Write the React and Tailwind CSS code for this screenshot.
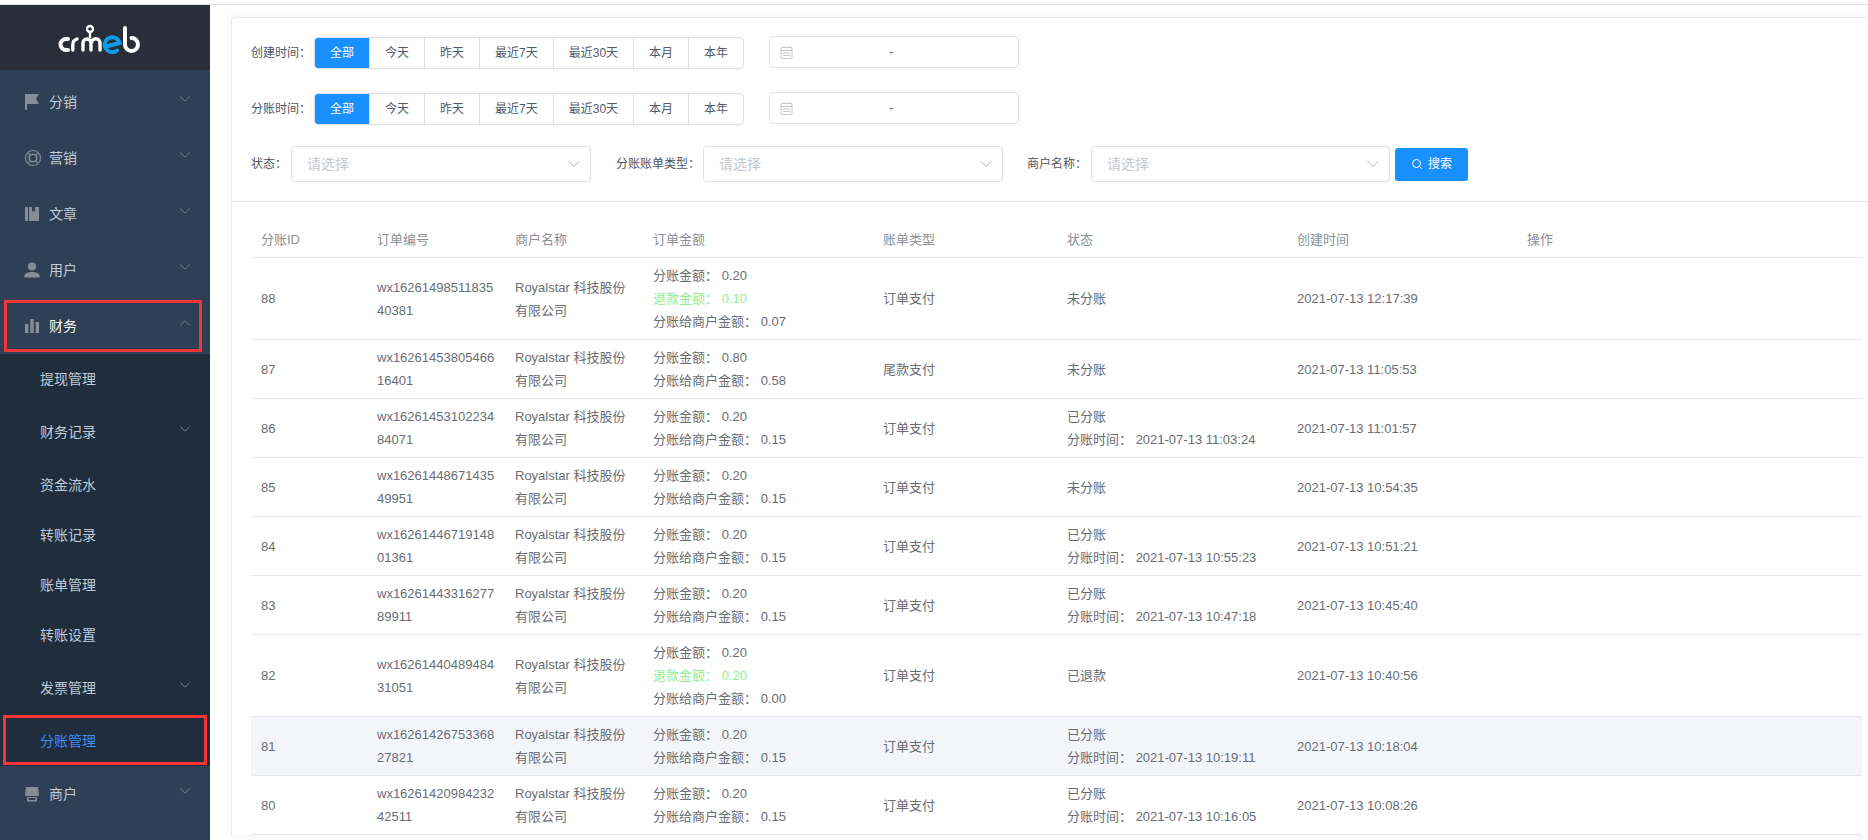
import React from 'react';
import { ChevronDown, ChevronUp, Search } from 'lucide-react';

const FlagIcon = () => (
  <svg width="16" height="18" viewBox="0 0 16 18" fill="#858d98">
    <rect x="1" y="1" width="2" height="16" />
    <path d="M3 1h12l-3 5 3 5H3z" />
  </svg>
);

const RingIcon = () => (
  <svg width="18" height="18" viewBox="0 0 18 18" fill="none" stroke="#858d98">
    <circle cx="9" cy="9" r="7.5" strokeWidth="1.2" />
    <circle cx="9" cy="9" r="3.8" strokeWidth="1.6" />
    <path d="M4 4l2.2 2.2M14 4l-2.2 2.2M4 14l2.2-2.2M14 14l-2.2-2.2" strokeWidth="1.2" />
  </svg>
);

const BookIcon = () => (
  <svg width="16" height="16" viewBox="0 0 16 16" fill="#858d98">
    <rect x="1" y="1" width="3" height="14" />
    <path d="M5 1h3v5l1.5-1.5L11 6V1h4v14H5z" />
  </svg>
);

const UserIcon = () => (
  <svg width="16" height="16" viewBox="0 0 16 16" fill="#858d98">
    <circle cx="8" cy="4.5" r="4" />
    <path d="M0.5 15.5v-2c0-2.2 3.5-3.5 7.5-3.5s7.5 1.3 7.5 3.5v2z" />
  </svg>
);

const ChartIcon = () => (
  <svg width="16" height="16" viewBox="0 0 16 16" fill="#858d98">
    <rect x="1" y="6" width="3.4" height="9" />
    <rect x="6.3" y="1" width="3.4" height="14" />
    <rect x="11.6" y="4" width="3.4" height="11" />
  </svg>
);

const ShopIcon = () => (
  <svg width="16" height="16" viewBox="0 0 16 16" fill="#858d98">
    <path d="M2 1h12l1 9H1z" />
    <rect x="3" y="11" width="10" height="1" />
    <rect x="3" y="12" width="1.5" height="3" />
    <rect x="11.5" y="12" width="1.5" height="3" />
    <rect x="3" y="14" width="10" height="1.5" />
  </svg>
);

const CalendarIcon = () => (
  <svg width="13" height="13" viewBox="0 0 13 13" fill="none" stroke="#c5c8ce">
    <rect x="1" y="1.5" width="11" height="11" rx="1" />
    <path d="M1 4.5h11M3 7h7M3 9.5h7M4 0v2M9 0v2" />
  </svg>
);

const Logo = () => (
  <svg width="90" height="30" viewBox="0 0 90 30" fill="none" strokeWidth="4" strokeLinecap="round">
    <g stroke="#ffffff">
      <path d="M14 15h-2a5.5 5.5 0 0 0 0 11h2" />
      <path d="M18.8 26v-5a6 6 0 0 1 4.2-6" strokeWidth="3.4" />
      <path d="M29 26v-7a4 4 0 0 1 8 0v7M37.5 19a4 4 0 0 1 8.5 0v7" strokeWidth="3.4" />
      <circle cx="36" cy="5" r="3" strokeWidth="2.4" />
      <path d="M36 9v5" strokeWidth="2.4" strokeLinecap="butt" />
      <path d="M71 4v16.5a6.5 6.5 0 1 0 6.5-6.5" />
    </g>
    <path d="M52 22.5l13.5-3.5a7.5 7.5 0 1 0-2.5 7.5" stroke="#0e9be8" />
  </svg>
);

const topMenus = [
  { name: '分销', icon: <FlagIcon /> },
  { name: '营销', icon: <RingIcon /> },
  { name: '文章', icon: <BookIcon /> },
  { name: '用户', icon: <UserIcon /> },
];

const subMenus = [
  { name: '提现管理' },
  { name: '财务记录', arrow: true },
  { name: '资金流水' },
  { name: '转账记录' },
  { name: '账单管理' },
  { name: '转账设置' },
  { name: '发票管理', arrow: true },
  { name: '分账管理', active: true },
];

const MenuRow = ({ icon, name, open, highlight }) => (
  <div className={`relative flex h-14 items-center pl-[24px] pr-[16px] text-sm ${highlight ? 'text-[#f5f5f5]' : 'text-[#bfcbd9]'}`}>
    <span className="flex w-[25px] shrink-0 items-center">{icon}</span>
    <span className="flex-1">{name}</span>
    {open ? (
      <ChevronUp size={18} strokeWidth={1} absoluteStrokeWidth className="-mt-1.5 text-[#75818f]" />
    ) : (
      <ChevronDown size={18} strokeWidth={1} absoluteStrokeWidth className="-mt-1.5 text-[#75818f]" />
    )}
    {highlight && <div className="absolute inset-y-0.5 left-1 right-2 border-[3px] border-[#f33535]" />}
  </div>
);

const Sidebar = () => (
  <aside className="flex w-[210px] shrink-0 flex-col bg-[#2f4056]">
    <div className="flex h-[65px] shrink-0 items-center justify-center bg-[#2a2e39] pr-[12px] pt-[3px]">
      <Logo />
    </div>
    <div className="pt-1">
      {topMenus.map((m) => (
        <MenuRow key={m.name} icon={m.icon} name={m.name} />
      ))}
      <MenuRow icon={<ChartIcon />} name="财务" open highlight />
      <div className="bg-[#1f2d3d]">
        {subMenus.map((s) => (
          <div
            key={s.name}
            className={`relative flex items-center pl-[40px] pr-[16px] text-sm ${s.arrow ? 'h-14' : 'h-[50px]'} ${s.active ? 'text-[#3d8ff2]' : 'text-[#bfcbd9]'}`}
          >
            <span className="flex-1">{s.name}</span>
            {s.arrow && <ChevronDown size={18} strokeWidth={1} absoluteStrokeWidth className="-mt-1.5 text-[#75818f]" />}
            {s.active && <div className="absolute -top-px bottom-px left-[3px] right-[3px] border-[3px] border-[#f33535]" />}
          </div>
        ))}
      </div>
      <MenuRow icon={<ShopIcon />} name="商户" />
    </div>
  </aside>
);

const ranges = ['全部', '今天', '昨天', '最近7天', '最近30天', '本月', '本年'];

const DateFilter = ({ label }) => (
  <div className="flex items-start text-xs">
    <label className="mt-px flex h-8 w-[63px] shrink-0 items-center text-[#4e5562]">{label}：</label>
    <div className="mt-px flex h-8 overflow-hidden rounded border border-[#dcdee2] text-[#515a6e]">
      {ranges.map((r, i) => (
        <span
          key={r}
          className={`flex items-center px-[15px] ${i === 0 ? '-my-px bg-[#1890ff] text-white' : 'border-l border-[#dcdee2]'}`}
        >
          {r}
        </span>
      ))}
    </div>
    <div className="ml-[25px] grid h-8 w-[250px] grid-cols-[1fr_auto_1fr] items-center rounded border border-[#dcdee2] pl-2.5 pr-4">
      <CalendarIcon />
      <span className="text-[#515a6e]">-</span>
    </div>
  </div>
);

const SelectBox = ({ width }) => (
  <div className={`flex h-9 items-center justify-between rounded border border-[#dcdee2] pl-[15px] pr-1.5 text-sm text-[#c5c8ce] ${width}`}>
    <span>请选择</span>
    <ChevronDown size={20} strokeWidth={1} absoluteStrokeWidth className="text-[#a8abb2]" />
  </div>
);

const rows = [
  { id: 88, no: 'wx1626149851183540381', total: '0.20', refund: '0.10', merchant: '0.07', type: '订单支付', status: '未分账', created: '2021-07-13 12:17:39' },
  { id: 87, no: 'wx1626145380546616401', total: '0.80', merchant: '0.58', type: '尾款支付', status: '未分账', created: '2021-07-13 11:05:53' },
  { id: 86, no: 'wx1626145310223484071', total: '0.20', merchant: '0.15', type: '订单支付', status: '已分账', time: '2021-07-13 11:03:24', created: '2021-07-13 11:01:57' },
  { id: 85, no: 'wx1626144867143549951', total: '0.20', merchant: '0.15', type: '订单支付', status: '未分账', created: '2021-07-13 10:54:35' },
  { id: 84, no: 'wx1626144671914801361', total: '0.20', merchant: '0.15', type: '订单支付', status: '已分账', time: '2021-07-13 10:55:23', created: '2021-07-13 10:51:21' },
  { id: 83, no: 'wx1626144331627789911', total: '0.20', merchant: '0.15', type: '订单支付', status: '已分账', time: '2021-07-13 10:47:18', created: '2021-07-13 10:45:40' },
  { id: 82, no: 'wx1626144048948431051', total: '0.20', refund: '0.20', merchant: '0.00', type: '订单支付', status: '已退款', created: '2021-07-13 10:40:56' },
  { id: 81, no: 'wx1626142675336827821', total: '0.20', merchant: '0.15', type: '订单支付', status: '已分账', time: '2021-07-13 10:19:11', created: '2021-07-13 10:18:04', hover: true },
  { id: 80, no: 'wx1626142098423242511', total: '0.20', merchant: '0.15', type: '订单支付', status: '已分账', time: '2021-07-13 10:16:05', created: '2021-07-13 10:08:26' },
];

const headers = ['分账ID', '订单编号', '商户名称', '订单金额', '账单类型', '状态', '创建时间', '操作'];
const gridCols = 'grid grid-cols-[116px_138px_138px_230px_184px_230px_230px_1fr]';

const Table = () => (
  <div className="mr-1.5 ml-[19px] mt-[19px] text-[13px] leading-[23px] text-[#696d74]">
    <div className={`${gridCols} h-[37px] items-start border-b border-[#e4e8ef] text-[#8c9098]`}>
      {headers.map((h) => (
        <div key={h} className="px-2.5 pt-[7px]">{h}</div>
      ))}
    </div>
    {rows.map((r) => (
      <div key={r.id} className={`${gridCols} items-center border-b border-[#e4e8ef] py-1.5 ${r.hover ? 'bg-[#f3f5f9]' : ''}`}>
        <div className="px-2.5">{r.id}</div>
        <div className="px-2.5 break-all">{r.no}</div>
        <div className="px-2.5">Royalstar 科技股份有限公司</div>
        <div className="px-2.5">
          <div>分账金额： {r.total}</div>
          {r.refund && <div className="text-[#90ee90]">退款金额： {r.refund}</div>}
          <div>分账给商户金额： {r.merchant}</div>
        </div>
        <div className="px-2.5">{r.type}</div>
        <div className="px-2.5 whitespace-nowrap">
          <div>{r.status}</div>
          {r.time && <div>分账时间： {r.time}</div>}
        </div>
        <div className="px-2.5">{r.created}</div>
        <div />
      </div>
    ))}
  </div>
);

export default function App() {
  return (
    <div className="flex h-[840px] flex-col overflow-hidden bg-white font-['Liberation_Sans','Noto_Sans_CJK_SC',sans-serif]">
      <div className="h-[5px] shrink-0 border-b border-[#dfe0e3] bg-white" />
      <div className="flex min-h-0 flex-1">
        <Sidebar />
        <main className="min-w-0 flex-1 overflow-hidden pl-[21px] pt-3">
          <div className="rounded-tl border-l border-t border-[#e8eaf4] shadow-[0_0_10px_rgba(40,50,90,0.07)]">
            <div className="border-b border-[#e8eaec] pl-[19px] pt-[18px] pb-[19px]">
              <DateFilter label="创建时间" />
              <div className="mt-[23px]">
                <DateFilter label="分账时间" />
              </div>
              <div className="mt-[21px] flex items-center text-xs text-[#4e5562]">
                <label className="w-10 shrink-0">状态：</label>
                <SelectBox width="w-[300px]" />
                <label className="ml-[25px] w-[87px] shrink-0">分账账单类型：</label>
                <SelectBox width="w-[300px]" />
                <label className="ml-6 w-[64px] shrink-0">商户名称：</label>
                <SelectBox width="w-[299px]" />
                <button className="ml-[5px] flex h-[33px] w-[73px] items-center justify-center gap-[5px] rounded-[3px] bg-[#1890ff] text-xs text-white">
                  <Search size={12} />
                  搜索
                </button>
              </div>
            </div>
            <Table />
          </div>
        </main>
      </div>
    </div>
  );
}
